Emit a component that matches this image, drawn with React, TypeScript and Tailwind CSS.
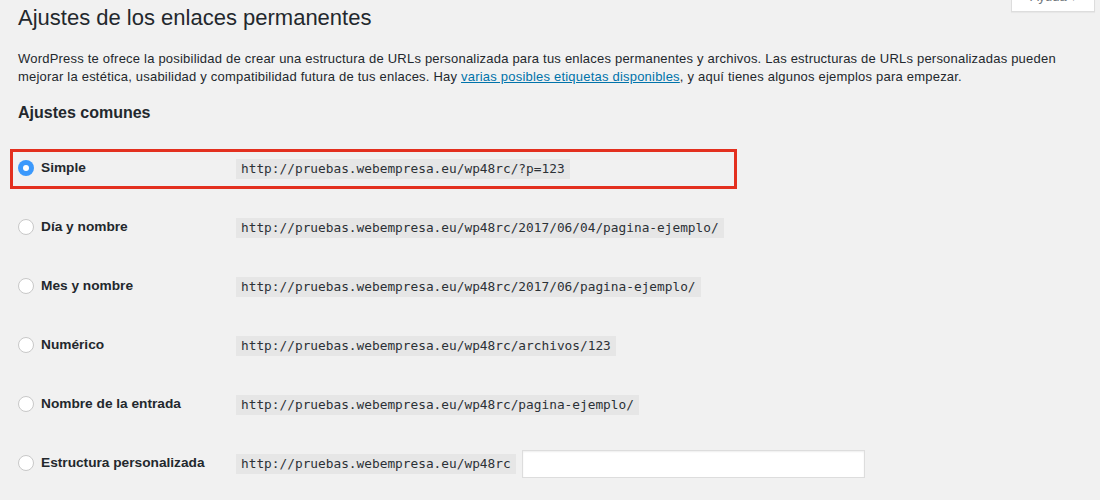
const rows = [
  { label: 'Simple', url: 'http://pruebas.webempresa.eu/wp48rc/?p=123', checked: true },
  { label: 'Día y nombre', url: 'http://pruebas.webempresa.eu/wp48rc/2017/06/04/pagina-ejemplo/' },
  { label: 'Mes y nombre', url: 'http://pruebas.webempresa.eu/wp48rc/2017/06/pagina-ejemplo/' },
  { label: 'Numérico', url: 'http://pruebas.webempresa.eu/wp48rc/archivos/123' },
  { label: 'Nombre de la entrada', url: 'http://pruebas.webempresa.eu/wp48rc/pagina-ejemplo/' },
  { label: 'Estructura personalizada', url: 'http://pruebas.webempresa.eu/wp48rc', custom: true },
];

function Radio({ checked }: { checked?: boolean }) {
  if (checked) {
    return (
      <span className="w-4 h-4 rounded-full bg-[#3b99fc] flex items-center justify-center shrink-0">
        <span className="w-[6px] h-[6px] rounded-full bg-white" />
      </span>
    );
  }
  return <span className="w-4 h-4 rounded-full bg-white border border-[#c8c8c8] shrink-0" />;
}

export default function App() {
  return (
    <div
      className="min-h-screen bg-[#f1f1f1] text-[#23282d] px-[18px] overflow-hidden"
      style={{ fontFamily: '"Liberation Sans", Arial, sans-serif' }}
    >
      <div className="flex justify-between items-start">
        <h1 className="text-[22px] leading-[30px] pt-[3px] font-normal">Ajustes de los enlaces permanentes</h1>
        <div className="-mt-[18px] -mr-[13px] h-[30px] w-[84px] bg-white border border-[#dddddd] shadow-[0_1px_1px_rgba(0,0,0,0.04)] flex items-center justify-center text-[13px] text-[#72777c]">
          Ayuda <span className="ml-1 text-[10px]">▾</span>
        </div>
      </div>

      <p className="mt-[17px] text-[13px] leading-[18px] tracking-[0.21px] pr-[8px]">
        WordPress te ofrece la posibilidad de crear una estructura de URLs personalizada para tus enlaces permanentes y archivos. Las estructuras de URLs personalizadas pueden mejorar la estética, usabilidad y compatibilidad futura de tus enlaces. Hay{' '}
        <a className="text-[#0073aa] underline">varias posibles etiquetas disponibles</a>, y aquí tienes algunos ejemplos para empezar.
      </p>

      <h2 className="mt-[17px] text-[16px] leading-[20px] font-semibold">Ajustes comunes</h2>

      <div className="mt-[16px] flex flex-col">
        {rows.map((r) => (
          <div key={r.label} className="relative h-[59px] flex items-center">
            {r.checked && (
              <span className="absolute -left-[8px] top-[9.5px] w-[727px] h-[40px] border-[3px] border-[#e3301f]" />
            )}
            <div className="w-[218px] flex items-center gap-[7px]">
              <Radio checked={r.checked} />
              <span className="text-[13.7px] font-semibold">{r.label}</span>
            </div>
            <code
              className="bg-[#e6e6e6] px-[5px] h-[20px] flex items-center text-[12.8px] text-[#2c3136]"
              style={{ fontFamily: '"DejaVu Sans Mono", "Liberation Mono", monospace' }}
            >
              {r.url}
            </code>
            {r.custom && (
              <input className="ml-[6px] w-[343px] h-[28px] bg-white border border-[#dddddd] shadow-[inset_0_1px_2px_rgba(0,0,0,0.07)] outline-none" />
            )}
          </div>
        ))}
      </div>
    </div>
  );
}
